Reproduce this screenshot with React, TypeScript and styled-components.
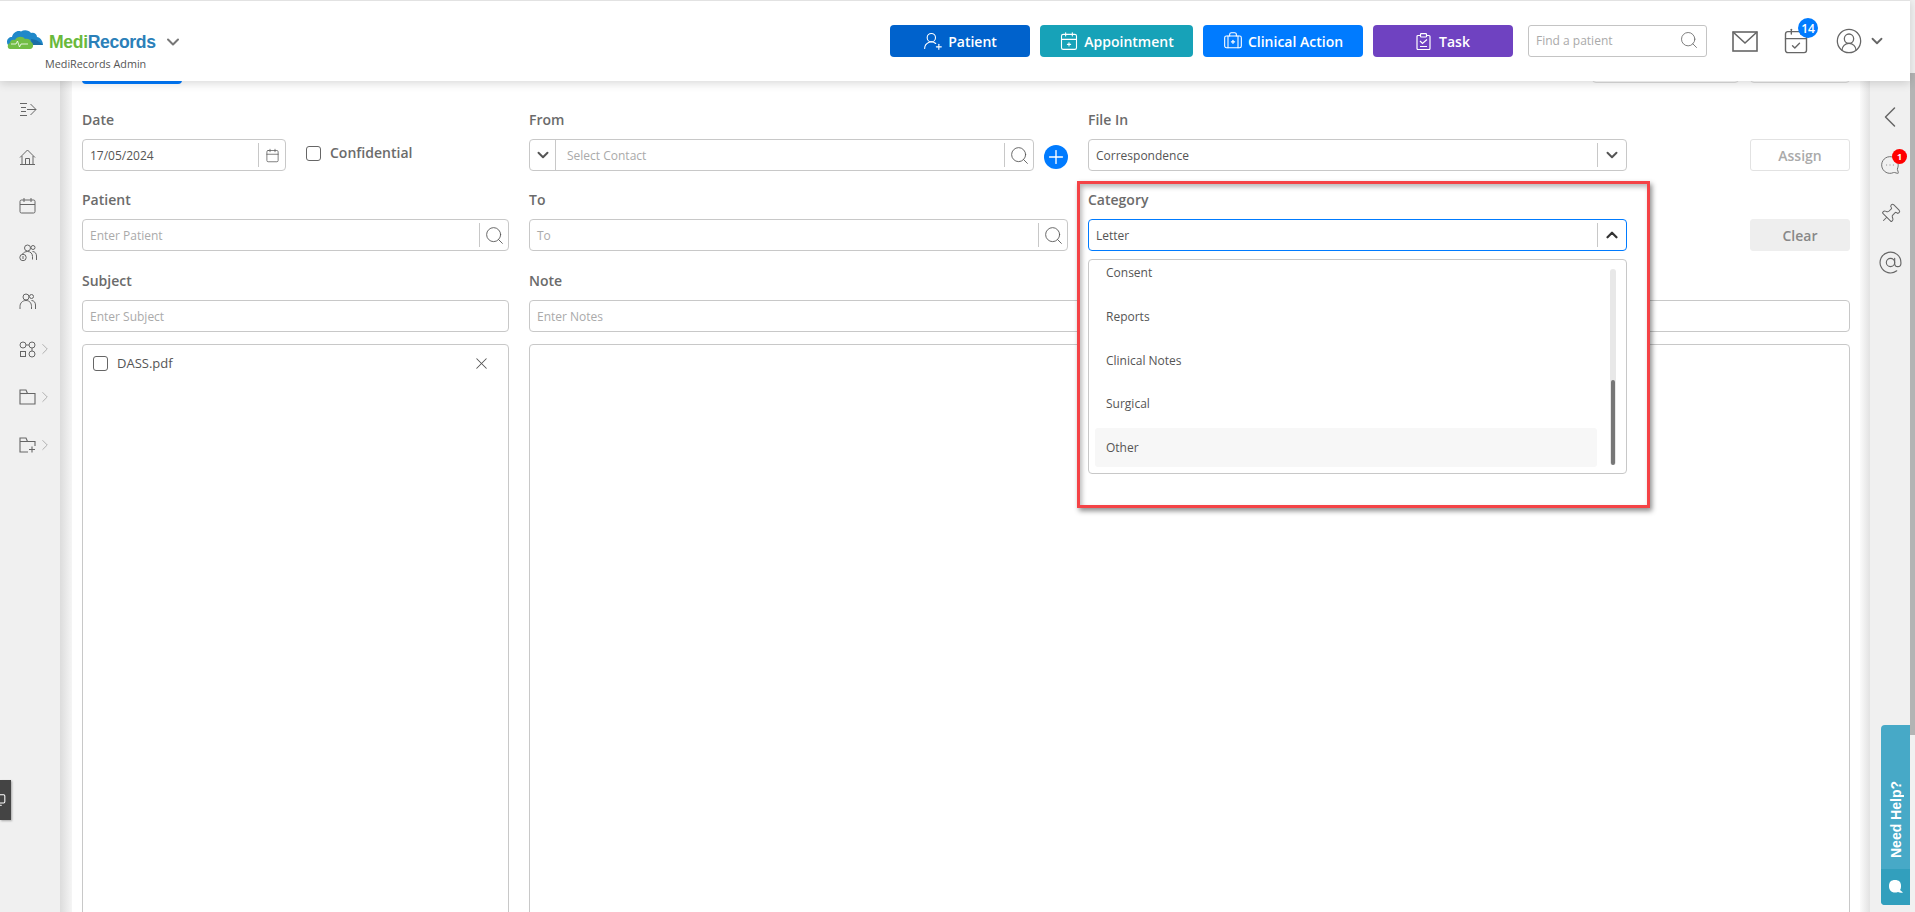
import styled, { createGlobalStyle } from 'styled-components';
import {
  AtSign,
  BriefcaseMedical,
  Calendar,
  CalendarCheck,
  CalendarPlus2,
  ChevronDown,
  ChevronLeft,
  ChevronRight,
  ChevronUp,
  CircleUserRound,
  MessageCircleMore,
  Monitor,
  Pin,
  Plus,
  Search,
  UserRoundPlus,
  X,
} from 'lucide-react';

const GlobalStyle = createGlobalStyle`
  html, body {
    margin: 0;
    height: 100%;
    overflow: hidden;
    background: #fff;
  }
  * { box-sizing: border-box; }
  body {
    font-family: "Open Sans", "Noto Sans", sans-serif;
    color: #555;
  }
`;

const Page = styled.div`
  position: relative;
  display: flex;
  width: 1915px;
  height: 912px;
  overflow: hidden;
`;

const Header = styled.header`
  position: absolute;
  top: 0;
  left: 0;
  right: 5px;
  z-index: 5;
  height: 81px;
  display: flex;
  align-items: center;
  padding: 0 21px 0 7px;
  background: #fff;
  border-top: 1px solid #e2e2e2;
  box-shadow: 0 2px 9px rgba(0, 0, 0, 0.16);
`;

const Brand = styled.div`
  width: 883px;
  flex-shrink: 0;
  align-self: flex-start;
  margin-top: 25px;
  display: flex;
  flex-direction: column;
`;

const BrandRow = styled.div`
  display: flex;
  align-items: center;
  height: 32px;
  color: #777;
`;

const CloudSvg = styled.svg`
  margin-bottom: 4px;
  flex-shrink: 0;
`;

const BrandName = styled.span`
  margin: 0 7px 0 6px;
  font-family: "Liberation Sans", Arial, sans-serif;
  font-size: 17.6px;
  font-weight: 700;
  letter-spacing: -0.35px;
  color: #2b80b9;
`;

const BrandGreen = styled.span`
  color: #6ab93c;
`;

const BrandSub = styled.div`
  margin: -1px 0 0 38px;
  font-size: 10.8px;
  line-height: 14px;
  color: #555;
`;

const ActionButton = styled.button<{ $bg: string; $width: number }>`
  width: ${({ $width }) => $width}px;
  height: 32px;
  margin-right: 10px;
  flex-shrink: 0;
  display: flex;
  align-items: center;
  justify-content: center;
  gap: 5px;
  padding: 0;
  border: 0;
  border-radius: 4px;
  background: ${({ $bg }) => $bg};
  color: #fff;
  font: 600 14px "Open Sans", sans-serif;
`;

const TaskSvg = styled.svg`
  margin-right: 3px;
`;

const FindBox = styled.div`
  width: 179px;
  height: 32px;
  margin-left: 5px;
  display: flex;
  align-items: center;
  justify-content: space-between;
  padding: 0 7px 2px 7px;
  border: 1px solid #c4c4c4;
  border-radius: 3px;
  font-size: 12px;
  color: #aaa;
`;

const HeaderIcons = styled.div`
  flex: 1;
  display: flex;
  align-items: center;
  padding-left: 25px;
  color: #666;
`;

const BellWrap = styled.div`
  position: relative;
  display: flex;
  margin-left: 24px;
  margin-right: 25px;
`;

const CountBadge = styled.span`
  position: absolute;
  top: -9px;
  left: 16px;
  width: 20px;
  height: 20px;
  display: flex;
  align-items: center;
  justify-content: center;
  border-radius: 50%;
  background: #007bff;
  color: #fff;
  font-size: 12px;
  font-weight: 600;
`;

const UserChevron = styled.span`
  display: flex;
  margin-left: 5px;
`;

const LeftRail = styled.nav`
  width: 60px;
  flex-shrink: 0;
  display: flex;
  flex-direction: column;
  padding-top: 85px;
  background: #f0f0f0;
  color: #666;
`;

const RailItem = styled.div`
  height: 48px;
  display: flex;
  align-items: center;
  padding-left: 19px;
`;

const RailChevron = styled.span`
  display: flex;
  margin-left: 0;
  color: #999;
`;

const RailShade = styled.div`
  width: 12px;
  flex-shrink: 0;
  background: linear-gradient(to right, #dcdcdc, #f5f5f5);
`;

const ScreenTab = styled.div`
  position: absolute;
  left: 0;
  top: 780px;
  z-index: 3;
  width: 11px;
  height: 40px;
  overflow: hidden;
  display: flex;
  align-items: center;
  justify-content: flex-end;
  padding-right: 5px;
  background: #444;
  color: #fff;
  box-shadow: 1px 1px 2px rgba(0, 0, 0, 0.3);
`;

const ScreenIcon = styled(Monitor)`
  flex-shrink: 0;
`;

const Content = styled.main`
  flex: 1;
  min-width: 0;
  display: flex;
  flex-direction: column;
  padding-left: 10px;
`;

const HiddenBar = styled.div`
  width: 1768px;
  height: 34px;
  margin-top: 50px;
  display: flex;
  justify-content: flex-end;
  gap: 11px;
  flex-shrink: 0;
`;

const HiddenBarLeft = styled.div`
  margin-right: auto;
  width: 100px;
  height: 34px;
  border-radius: 4px;
  background: #007bff;
`;

const GhostButton = styled.div<{ $width: number }>`
  width: ${({ $width }) => $width}px;
  height: 33px;
  border: 1px solid #ddd;
  border-radius: 4px;
`;

const FormGrid = styled.div`
  display: grid;
  grid-template-columns: 427px 539px 539px 203px;
  grid-template-rows: 80px 81px 62px;
  column-gap: 20px;
  width: 1768px;
  margin-top: 25px;
`;

const Cell = styled.div`
  position: relative;
  display: flex;
  flex-direction: column;
  min-width: 0;
`;

const Label = styled.label`
  height: 30px;
  display: block;
  padding-top: 1px;
  font-size: 14px;
  line-height: 19px;
  font-weight: 600;
  color: #6b6b6b;
`;

const ButtonCell = styled.div`
  display: flex;
  justify-content: flex-end;
  padding-top: 30px;
`;

const Field = styled.div<{ $width?: number; $focus?: boolean }>`
  width: ${({ $width }) => ($width ? `${$width}px` : '100%')};
  height: 32px;
  flex-shrink: 0;
  display: flex;
  align-items: center;
  border: 1px solid ${({ $focus }) => ($focus ? '#007bff' : '#c8c8c8')};
  border-radius: 4px;
  background: #fff;
  font-size: 12px;
`;

const FieldText = styled.span<{ $muted?: boolean; $inset?: number }>`
  flex: 1;
  min-width: 0;
  padding-left: ${({ $inset }) => $inset ?? 7}px;
  color: ${({ $muted }) => ($muted ? '#aaa' : '#555')};
`;

const FieldAddon = styled.span<{ $width: number; $side?: 'left' | 'right' }>`
  width: ${({ $width }) => $width}px;
  height: 24px;
  flex-shrink: 0;
  display: flex;
  align-items: center;
  justify-content: center;
  color: #555;
  ${({ $side }) =>
    $side === 'left' ? 'border-right: 1px solid #c8c8c8; height: 30px;' : 'border-left: 1px solid #c8c8c8;'}
`;

const DateRow = styled.div`
  display: flex;
  align-items: center;
`;

const CheckBox = styled.span`
  width: 15px;
  height: 15px;
  flex-shrink: 0;
  border: 1px solid #666;
  border-radius: 3px;
  background: #fff;
`;

const ConfidentialLabel = styled.span`
  margin-left: 9px;
  font-size: 14px;
  font-weight: 600;
  color: #6b6b6b;
  position: relative;
  top: -1px;
`;

const DateCheck = styled.div`
  margin: 0 0 3px 20px;
  display: flex;
  align-items: center;
`;

const FromRow = styled.div`
  display: flex;
  align-items: center;
`;

const AddCircle = styled.span`
  width: 24px;
  height: 24px;
  margin: 4px 0 0 10px;
  flex-shrink: 0;
  display: flex;
  align-items: center;
  justify-content: center;
  border-radius: 50%;
  background: #007bff;
  color: #fff;
`;

const SideButton = styled.div<{ $filled?: boolean }>`
  width: 100px;
  height: 32px;
  display: flex;
  align-items: center;
  justify-content: center;
  border: 1px solid ${({ $filled }) => ($filled ? '#eee' : '#e2e2e2')};
  border-radius: 3px;
  background: ${({ $filled }) => ($filled ? '#eee' : '#fff')};
  color: ${({ $filled }) => ($filled ? '#888' : '#aaa')};
  font-size: 14px;
  font-weight: 600;
`;

const NoteCell = styled(Cell)`
  grid-column: 2 / 5;
`;

const Annotation = styled.div`
  position: absolute;
  z-index: 2;
  top: -8px;
  left: -11px;
  width: 573px;
  height: 327px;
  padding: 5px 20px 0 8px;
  background: #fff;
  border: 3px solid #f44346;
  box-shadow: 2px 3px 5px rgba(0, 0, 0, 0.45), inset 2px 3px 5px rgba(0, 0, 0, 0.28);
  color: #555;
`;

const Menu = styled.div`
  position: relative;
  margin-top: 8px;
  width: 100%;
  height: 215px;
  padding: 0 6px;
  border: 1px solid #c8c8c8;
  border-radius: 4px;
  overflow: hidden;
`;

const MenuList = styled.ul`
  list-style: none;
  margin: -7px 0 0;
  padding: 0;
  width: 502px;
  display: flex;
  flex-direction: column;
  gap: 4.8px;
`;

const MenuItem = styled.li<{ $active?: boolean }>`
  height: 39px;
  flex-shrink: 0;
  display: flex;
  align-items: center;
  padding-left: 11px;
  border-radius: 3px;
  font-size: 12px;
  color: #555;
  background: ${({ $active }) => ($active ? '#f7f7f7' : 'transparent')};
`;

const MenuScroll = styled.div`
  position: absolute;
  top: 9px;
  right: 10px;
  width: 6px;
  height: 196px;
  border-radius: 3px;
  background: #e8e8e8;
  display: flex;
  align-items: flex-end;
`;

const MenuThumb = styled.div`
  width: 4px;
  height: 85px;
  margin-left: 1px;
  border-radius: 2px;
  background: #777;
`;

const Panes = styled.div`
  flex: 1;
  display: flex;
  gap: 20px;
  width: 1768px;
  min-height: 0;
  margin-top: 12px;
  margin-bottom: -8px;
`;

const FilePane = styled.div`
  width: 427px;
  flex-shrink: 0;
  display: flex;
  align-items: flex-start;
  padding: 11px 17px 0 10px;
  border: 1px solid #c8c8c8;
  border-radius: 4px;
  font-size: 13px;
`;

const FileName = styled.span`
  flex: 1;
  margin-left: 9px;
  line-height: 15px;
  color: #555;
`;

const FileRemove = styled(X)`
  margin-top: -2px;
`;

const ViewerPane = styled.div`
  flex: 1;
  border: 1px solid #c8c8c8;
  border-radius: 4px;
`;

const RailOuterShade = styled.div`
  width: 10px;
  flex-shrink: 0;
  background: linear-gradient(to right, #fbfbfb, #e2e2e2);
`;

const RightRail = styled.aside`
  position: relative;
  width: 40px;
  flex-shrink: 0;
  display: flex;
  flex-direction: column;
  align-items: center;
  padding-top: 93px;
  background: #f0f0f0;
  color: #666;
`;

const RightRailItem = styled.div`
  height: 48.3px;
  display: flex;
  align-items: center;
  justify-content: center;
`;

const ChatWrap = styled.div`
  position: relative;
  display: flex;
`;

const ChatIcon = styled(MessageCircleMore)`
  transform: scaleX(-1);
`;

const PinIcon = styled(Pin)`
  transform: rotate(45deg);
`;

const AlertBadge = styled.span`
  position: absolute;
  top: -6px;
  left: 12px;
  width: 15px;
  height: 15px;
  display: flex;
  align-items: center;
  justify-content: center;
  border-radius: 50%;
  background: #f00;
  color: #fff;
  font-size: 9px;
  font-weight: 700;
`;

const HelpTab = styled.div`
  position: absolute;
  top: 725px;
  right: 0;
  width: 29px;
  height: 180px;
  display: flex;
  flex-direction: column;
  overflow: hidden;
  border-radius: 4px 0 0 4px;
  background: #47a9c7;
  color: #fff;
`;

const HelpLabel = styled.div`
  height: 144px;
  display: flex;
  align-items: flex-end;
  justify-content: center;
  padding-bottom: 11px;
`;

const HelpText = styled.span`
  writing-mode: vertical-rl;
  transform: rotate(180deg);
  font-family: "Liberation Sans", Arial, sans-serif;
  font-size: 14px;
  font-weight: 700;
`;

const HelpFoot = styled.div`
  flex: 1;
  display: flex;
  align-items: center;
  justify-content: center;
  background: #329fbd;
`;

const ScrollTrack = styled.div`
  width: 5px;
  flex-shrink: 0;
  padding-top: 73px;
  background: #f1f1f1;
`;

const ScrollThumb = styled.div`
  height: 662px;
  background: #b4b4b4;
`;

function CloudLogo() {
  return (
    <CloudSvg width="36" height="20" viewBox="0 0 36 20">
      <path
        d="M0 12C0 9 2 7 5 7 6 3 10 0 14 1.500 17-.5 22 0 24 3 27 2 30 4 30 7 33 7 36 11 36 15H24L4 16C1 16 0 14 0 12z"
        fill="#1f88c9"
      />
      <path d="M24 9c4 0 8 2 12 6H25z" fill="#1b6ea6" />
      <path
        d="M3 19C0 19 0 14 3 13 3 10 6 9 8 10 10 6 16 6 18 9 21 8 24 10 24 12 27 13 27 19 23 19z"
        fill="#72bd45"
      />
      <path d="M4 14h5l1.500-3 2 6 1.500-3h7" fill="none" stroke="#fff" strokeWidth="0.8" />
    </CloudSvg>
  );
}

function MailIcon() {
  return (
    <svg width="26" height="21" viewBox="0 0 26 21" fill="none" stroke="#666" strokeWidth="1.6">
      <rect x="1" y="1" width="24" height="19" />
      <path d="M1 1l12 11L25 1" />
    </svg>
  );
}

function TaskIcon() {
  return (
    <TaskSvg width="15" height="17" viewBox="0 0 15 17" fill="none" stroke="#fff" strokeWidth="1.2">
      <rect x="1" y="2.500" width="13" height="14" rx="1" />
      <rect x="4.500" y="0.600" width="6" height="3.400" rx="0.800" fill="#6f42c1" />
      <path d="M4 8l2.500 2.500L11 6.500M4 13.500h7" />
    </TaskSvg>
  );
}

function CollapseIcon() {
  return (
    <svg width="18" height="15" viewBox="0 0 18 15" fill="none" stroke="#666" strokeWidth="1">
      <path d="M1 1.500h7M2 5.500h5M2 9.500h5M1 13.500h7" />
      <path d="M8 7.500h9M11.500 2l5.500 5.500-5.500 5.500" />
    </svg>
  );
}

function HomeIcon() {
  return (
    <svg width="17" height="17" viewBox="0 0 17 17" fill="none" stroke="#666" strokeWidth="1">
      <path d="M1 8.500l7.500-7.500 7.500 7.500" />
      <path d="M3 7v8.500M14 7v8.500M1 15.500h15" />
      <path d="M6.500 15.500v-6h4v6" />
    </svg>
  );
}

function CalendarIcon() {
  return (
    <svg width="17" height="17" viewBox="0 0 17 17" fill="none" stroke="#666" strokeWidth="1">
      <rect x="1" y="3" width="15" height="13" rx="1.500" />
      <path d="M1 7.500h15M5 1v4M12 1v4" />
    </svg>
  );
}

function TeamIcon() {
  return (
    <svg width="18" height="18" viewBox="0 0 18 18" fill="none" stroke="#666" strokeWidth="1">
      <circle cx="8.500" cy="4" r="3" />
      <circle cx="14" cy="3.500" r="2" />
      <path d="M3.500 10c1-1.500 3-2.500 5-2.500 3 0 5 2 5 5v3" />
      <path d="M13.500 7.500c2.500 0 4 2 4 4.500v4" />
      <circle cx="4" cy="13.500" r="3.200" />
      <path d="M4 12v3" />
    </svg>
  );
}

function UsersIcon() {
  return (
    <svg width="17" height="17" viewBox="0 0 17 17" fill="none" stroke="#666" strokeWidth="1">
      <circle cx="7" cy="4" r="3" />
      <circle cx="12.500" cy="3.500" r="2" />
      <path d="M1 16v-2.500c0-3.500 2.500-6 6-6s5.500 2.500 5.500 6V16" />
      <path d="M12.500 7.500c2.500 0 4 2 4 4.500v4" />
    </svg>
  );
}

function FlowIcon() {
  return (
    <svg width="17" height="17" viewBox="0 0 17 17" fill="none" stroke="#666" strokeWidth="1">
      <circle cx="4" cy="4" r="3" />
      <circle cx="13" cy="4" r="3" />
      <rect x="1.500" y="10.500" width="5" height="5" />
      <circle cx="13" cy="13" r="3" />
      <path d="M7 4h3M13 7v3" />
    </svg>
  );
}

function FolderIcon() {
  return (
    <svg width="17" height="16" viewBox="0 0 17 16" fill="none" stroke="#666" strokeWidth="1.100">
      <path d="M1 15V1h6l1.500 3.500H16V15z" />
      <path d="M1 4.500h7.500" />
    </svg>
  );
}

function FolderAddIcon() {
  return (
    <svg width="17" height="16" viewBox="0 0 17 16" fill="none" stroke="#666" strokeWidth="1.100">
      <path d="M9 15H1V1h6l1.500 3.500H16V9" />
      <path d="M1 4.500h7.500M13 9.500v6M10 12.500h6" />
    </svg>
  );
}

function ChatBlob() {
  return (
    <svg width="17" height="17" viewBox="0 0 17 17" fill="#fff">
      <path d="M8 1c4 0 6 2 6 6 0 2-.3 3-1 4l3 2.500c-2 .4-3.500.2-5-.5-1 .4-2 .5-3 .5-4 0-6-2.500-6-6.500S4 1 8 1z" />
    </svg>
  );
}

function RailArrow() {
  return (
    <RailChevron>
      <ChevronRight size={18} strokeWidth={1} />
    </RailChevron>
  );
}

export default function App() {
  return (
    <Page>
      <GlobalStyle />

      <Header>
        <Brand>
          <BrandRow>
            <CloudLogo />
            <BrandName>
              <BrandGreen>Medi</BrandGreen>Records
            </BrandName>
            <ChevronDown size={20} strokeWidth={2.4} />
          </BrandRow>
          <BrandSub>MediRecords Admin</BrandSub>
        </Brand>

        <ActionButton $bg="#0062cc" $width={140}>
          <UserRoundPlus size={20} strokeWidth={1.3} /> Patient
        </ActionButton>
        <ActionButton $bg="#17a2b8" $width={153}>
          <CalendarPlus2 size={20} strokeWidth={1.3} /> Appointment
        </ActionButton>
        <ActionButton $bg="#007bff" $width={160}>
          <BriefcaseMedical size={20} strokeWidth={1.3} /> Clinical Action
        </ActionButton>
        <ActionButton $bg="#6f42c1" $width={140}>
          <TaskIcon /> Task
        </ActionButton>

        <FindBox>
          Find a patient
          <Search size={20} strokeWidth={1} color="#666" />
        </FindBox>

        <HeaderIcons>
          <MailIcon />
          <BellWrap>
            <CalendarCheck size={28} strokeWidth={1.2} />
            <CountBadge>14</CountBadge>
          </BellWrap>
          <CircleUserRound size={28} strokeWidth={1.1} />
          <UserChevron>
            <ChevronDown size={18} strokeWidth={2.4} />
          </UserChevron>
        </HeaderIcons>
      </Header>

      <LeftRail>
        <RailItem>
          <CollapseIcon />
        </RailItem>
        <RailItem>
          <HomeIcon />
        </RailItem>
        <RailItem>
          <CalendarIcon />
        </RailItem>
        <RailItem>
          <TeamIcon />
        </RailItem>
        <RailItem>
          <UsersIcon />
        </RailItem>
        <RailItem>
          <FlowIcon />
          <RailArrow />
        </RailItem>
        <RailItem>
          <FolderIcon />
          <RailArrow />
        </RailItem>
        <RailItem>
          <FolderAddIcon />
          <RailArrow />
        </RailItem>
      </LeftRail>
      <RailShade />

      <ScreenTab>
        <ScreenIcon size={14} strokeWidth={1.8} />
      </ScreenTab>

      <Content>
        <HiddenBar>
          <HiddenBarLeft />
          <GhostButton $width={147} />
          <GhostButton $width={100} />
        </HiddenBar>

        <FormGrid>
          <Cell>
            <Label>Date</Label>
            <DateRow>
              <Field $width={204}>
                <FieldText>17/05/2024</FieldText>
                <FieldAddon $width={27}>
                  <Calendar size={15} strokeWidth={1.2} />
                </FieldAddon>
              </Field>
              <DateCheck>
                <CheckBox />
                <ConfidentialLabel>Confidential</ConfidentialLabel>
              </DateCheck>
            </DateRow>
          </Cell>
          <Cell>
            <Label>From</Label>
            <FromRow>
              <Field $width={505}>
                <FieldAddon $width={26} $side="left">
                  <ChevronDown size={18} strokeWidth={2.6} />
                </FieldAddon>
                <FieldText $muted $inset={11}>
                  Select Contact
                </FieldText>
                <FieldAddon $width={29}>
                  <Search size={21} strokeWidth={1} />
                </FieldAddon>
              </Field>
              <AddCircle>
                <Plus size={22} strokeWidth={1.5} />
              </AddCircle>
            </FromRow>
          </Cell>
          <Cell>
            <Label>File In</Label>
            <Field>
              <FieldText>Correspondence</FieldText>
              <FieldAddon $width={29}>
                <ChevronDown size={18} strokeWidth={2.6} />
              </FieldAddon>
            </Field>
          </Cell>
          <ButtonCell>
            <SideButton>Assign</SideButton>
          </ButtonCell>

          <Cell>
            <Label>Patient</Label>
            <Field>
              <FieldText $muted>Enter Patient</FieldText>
              <FieldAddon $width={29}>
                <Search size={21} strokeWidth={1} />
              </FieldAddon>
            </Field>
          </Cell>
          <Cell>
            <Label>To</Label>
            <Field>
              <FieldText $muted>To</FieldText>
              <FieldAddon $width={29}>
                <Search size={21} strokeWidth={1} />
              </FieldAddon>
            </Field>
          </Cell>
          <Cell>
            <Annotation>
              <Label>Category</Label>
              <Field $focus>
                <FieldText>Letter</FieldText>
                <FieldAddon $width={29}>
                  <ChevronUp size={18} strokeWidth={3} color="#333" />
                </FieldAddon>
              </Field>
              <Menu>
                <MenuList>
                  <MenuItem>Consent</MenuItem>
                  <MenuItem>Reports</MenuItem>
                  <MenuItem>Clinical Notes</MenuItem>
                  <MenuItem>Surgical</MenuItem>
                  <MenuItem $active>Other</MenuItem>
                </MenuList>
                <MenuScroll>
                  <MenuThumb />
                </MenuScroll>
              </Menu>
            </Annotation>
          </Cell>
          <ButtonCell>
            <SideButton $filled>Clear</SideButton>
          </ButtonCell>

          <Cell>
            <Label>Subject</Label>
            <Field>
              <FieldText $muted>Enter Subject</FieldText>
            </Field>
          </Cell>
          <NoteCell>
            <Label>Note</Label>
            <Field>
              <FieldText $muted>Enter Notes</FieldText>
            </Field>
          </NoteCell>
        </FormGrid>

        <Panes>
          <FilePane>
            <CheckBox />
            <FileName>DASS.pdf</FileName>
            <FileRemove size={19} strokeWidth={1.3} />
          </FilePane>
          <ViewerPane />
        </Panes>
      </Content>

      <RailOuterShade />
      <RightRail>
        <RightRailItem>
          <ChevronLeft size={36} strokeWidth={1} />
        </RightRailItem>
        <RightRailItem>
          <ChatWrap>
            <ChatIcon size={20} strokeWidth={1.1} />
            <AlertBadge>1</AlertBadge>
          </ChatWrap>
        </RightRailItem>
        <RightRailItem>
          <PinIcon size={22} strokeWidth={1.1} />
        </RightRailItem>
        <RightRailItem>
          <AtSign size={25} strokeWidth={1.1} />
        </RightRailItem>
        <HelpTab>
          <HelpLabel>
            <HelpText>Need Help?</HelpText>
          </HelpLabel>
          <HelpFoot>
            <ChatBlob />
          </HelpFoot>
        </HelpTab>
      </RightRail>
      <ScrollTrack>
        <ScrollThumb />
      </ScrollTrack>
    </Page>
  );
}
